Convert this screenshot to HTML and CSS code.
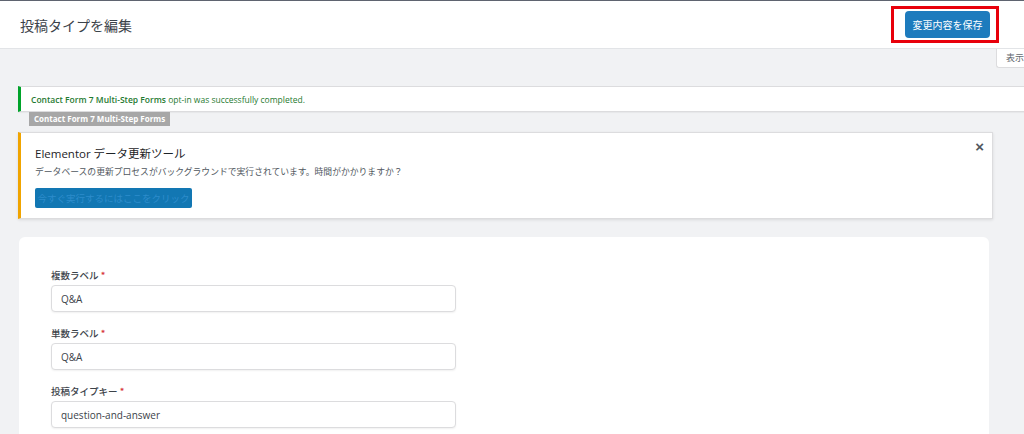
FILE: index.html
```html
<!DOCTYPE html>
<html lang="ja">
<head>
  <meta charset="UTF-8" />
  <title>投稿タイプを編集</title>
  <link rel="stylesheet" href="styles.css">
</head>
<body>
  <header class="topbar">
    <h1 class="page-title">投稿タイプを編集</h1>
    <div class="save-mark">
      <button class="save-btn">変更内容を保存</button>
    </div>
  </header>

  <div class="screen-meta">
    <span class="screen-tab">表示</span>
  </div>

  <div class="notice notice-success">
    <p><strong>Contact Form 7 Multi-Step Forms</strong> opt-in was successfully completed.</p>
  </div>
  <div class="plugin-badge">Contact Form 7 Multi-Step Forms</div>

  <div class="notice notice-warning">
    <button class="notice-close" aria-label="閉じる">&times;</button>
    <h3>Elementor データ更新ツール</h3>
    <p>データベースの更新プロセスがバックグラウンドで実行されています。時間がかかりますか？</p>
    <a class="run-btn" href="#">今すぐ実行するにはここをクリック</a>
  </div>

  <div class="form-card">
    <div class="field">
      <label>複数ラベル <span class="req">*</span></label>
      <input type="text" value="Q&amp;A" />
    </div>
    <div class="field">
      <label>単数ラベル <span class="req">*</span></label>
      <input type="text" value="Q&amp;A" />
    </div>
    <div class="field">
      <label>投稿タイプキー <span class="req">*</span></label>
      <input type="text" value="question-and-answer" />
    </div>
  </div>
</body>
</html>
```

FILE: styles.css
```css
* {
  box-sizing: border-box;
}

html, body {
  overflow: hidden;
}

body {
  margin: 0;
  font-family: "Open Sans", "Noto Sans CJK JP", sans-serif;
  background: #f1f2f4;
  color: #3c434a;
  border-top: 1px solid #5f6470;
  height: 434px;
}

.topbar {
  display: flex;
  justify-content: space-between;
  align-items: center;
  height: 48px;
  padding: 0 25px 0 20px;
  background: #fff;
  border-bottom: 1px solid #e2e4e7;
}

.page-title {
  margin: 0;
  font-family: "Noto Sans CJK JP", sans-serif;
  font-size: 14px;
  font-weight: 400;
  color: #3c434a;
}

.save-mark {
  border: 3px solid #e8000b;
  padding: 2px 6px 2px 11px;
}

.save-btn {
  display: block;
  width: 85px;
  height: 27px;
  border: none;
  border-radius: 4px;
  background: #1d7bbd;
  color: #fff;
  font-family: "Noto Sans CJK JP", sans-serif;
  font-size: 10px;
  padding: 0;
}

.screen-meta {
  display: flex;
  justify-content: flex-end;
  height: 20px;
}

.screen-tab {
  display: block;
  background: #fff;
  border: 1px solid #dcdcde;
  border-top: none;
  border-right: none;
  border-radius: 0 0 0 3px;
  padding: 0 0 0 9px;
  font-family: "Noto Sans CJK JP", sans-serif;
  font-size: 9px;
  color: #646970;
  width: 28px;
  height: 19px;
  line-height: 18px;
}

.notice {
  background: #fff;
  border: 1px solid #dcdcde;
  box-shadow: 0 1px 1px rgba(0, 0, 0, 0.04);
}

.notice p {
  margin: 0;
}

.notice-success {
  margin: 17px -4px 0 18px;
  height: 26px;
  border-left: 3px solid #00a32a;
  padding: 0 10px;
  display: flex;
  align-items: center;
  font-size: 8.5px;
  color: #1f7a31;
}

.notice-success strong {
  font-weight: 600;
}

.plugin-badge {
  width: fit-content;
  margin-left: 29px;
  height: 14px;
  padding: 0 5px;
  background: #a7a7a7;
  color: #fff;
  font-size: 8px;
  font-weight: 700;
  line-height: 14px;
}

.notice-warning {
  position: relative;
  margin: 6px 31px 0 18px;
  height: 87px;
  border-left: 3px solid #f0a400;
  padding: 13px 14px;
  box-shadow: 0 1px 3px rgba(0, 0, 0, 0.1);
}

.notice-warning h3 {
  margin: 0;
  font-size: 11.5px;
  font-weight: 400;
  color: #1d2327;
  line-height: 16px;
}

.notice-warning p {
  margin-top: 3px;
  font-family: "Noto Sans CJK JP", sans-serif;
  font-size: 8.8px;
  color: #50575e;
  line-height: 14px;
}

.run-btn {
  display: inline-block;
  margin-top: 9px;
  width: 157px;
  height: 20px;
  background: #1277b3;
  border-radius: 2px;
  color: #2d8ccb;
  font-family: "Noto Sans CJK JP", sans-serif;
  font-size: 9.5px;
  line-height: 20px;
  text-align: center;
  text-decoration: none;
}

.notice-close {
  position: absolute;
  top: 5px;
  right: 8px;
  border: none;
  background: none;
  padding: 0;
  font-size: 15px;
  font-weight: 700;
  color: #50575e;
  cursor: pointer;
}

.form-card {
  margin: 18px 35px 0 19px;
  background: #fff;
  border-radius: 6px 6px 0 0;
  padding: 32px 32px 0;
  height: 197px;
  overflow: hidden;
}

.field {
  display: flex;
  flex-direction: column;
  gap: 3px;
  margin-bottom: 15px;
}

.field label {
  font-family: "Noto Sans CJK JP", sans-serif;
  font-size: 9.5px;
  font-weight: 500;
  color: #3c434a;
  line-height: 13px;
}

.req {
  color: #d63638;
}

.field input {
  width: 405px;
  height: 27px;
  border: 1px solid #dcdcde;
  border-radius: 4px;
  padding: 0 9px;
  font-family: "Open Sans", sans-serif;
  font-size: 10px;
  color: #3c434a;
  box-shadow: 0 1px 2px rgba(0, 0, 0, 0.06);
}
```
